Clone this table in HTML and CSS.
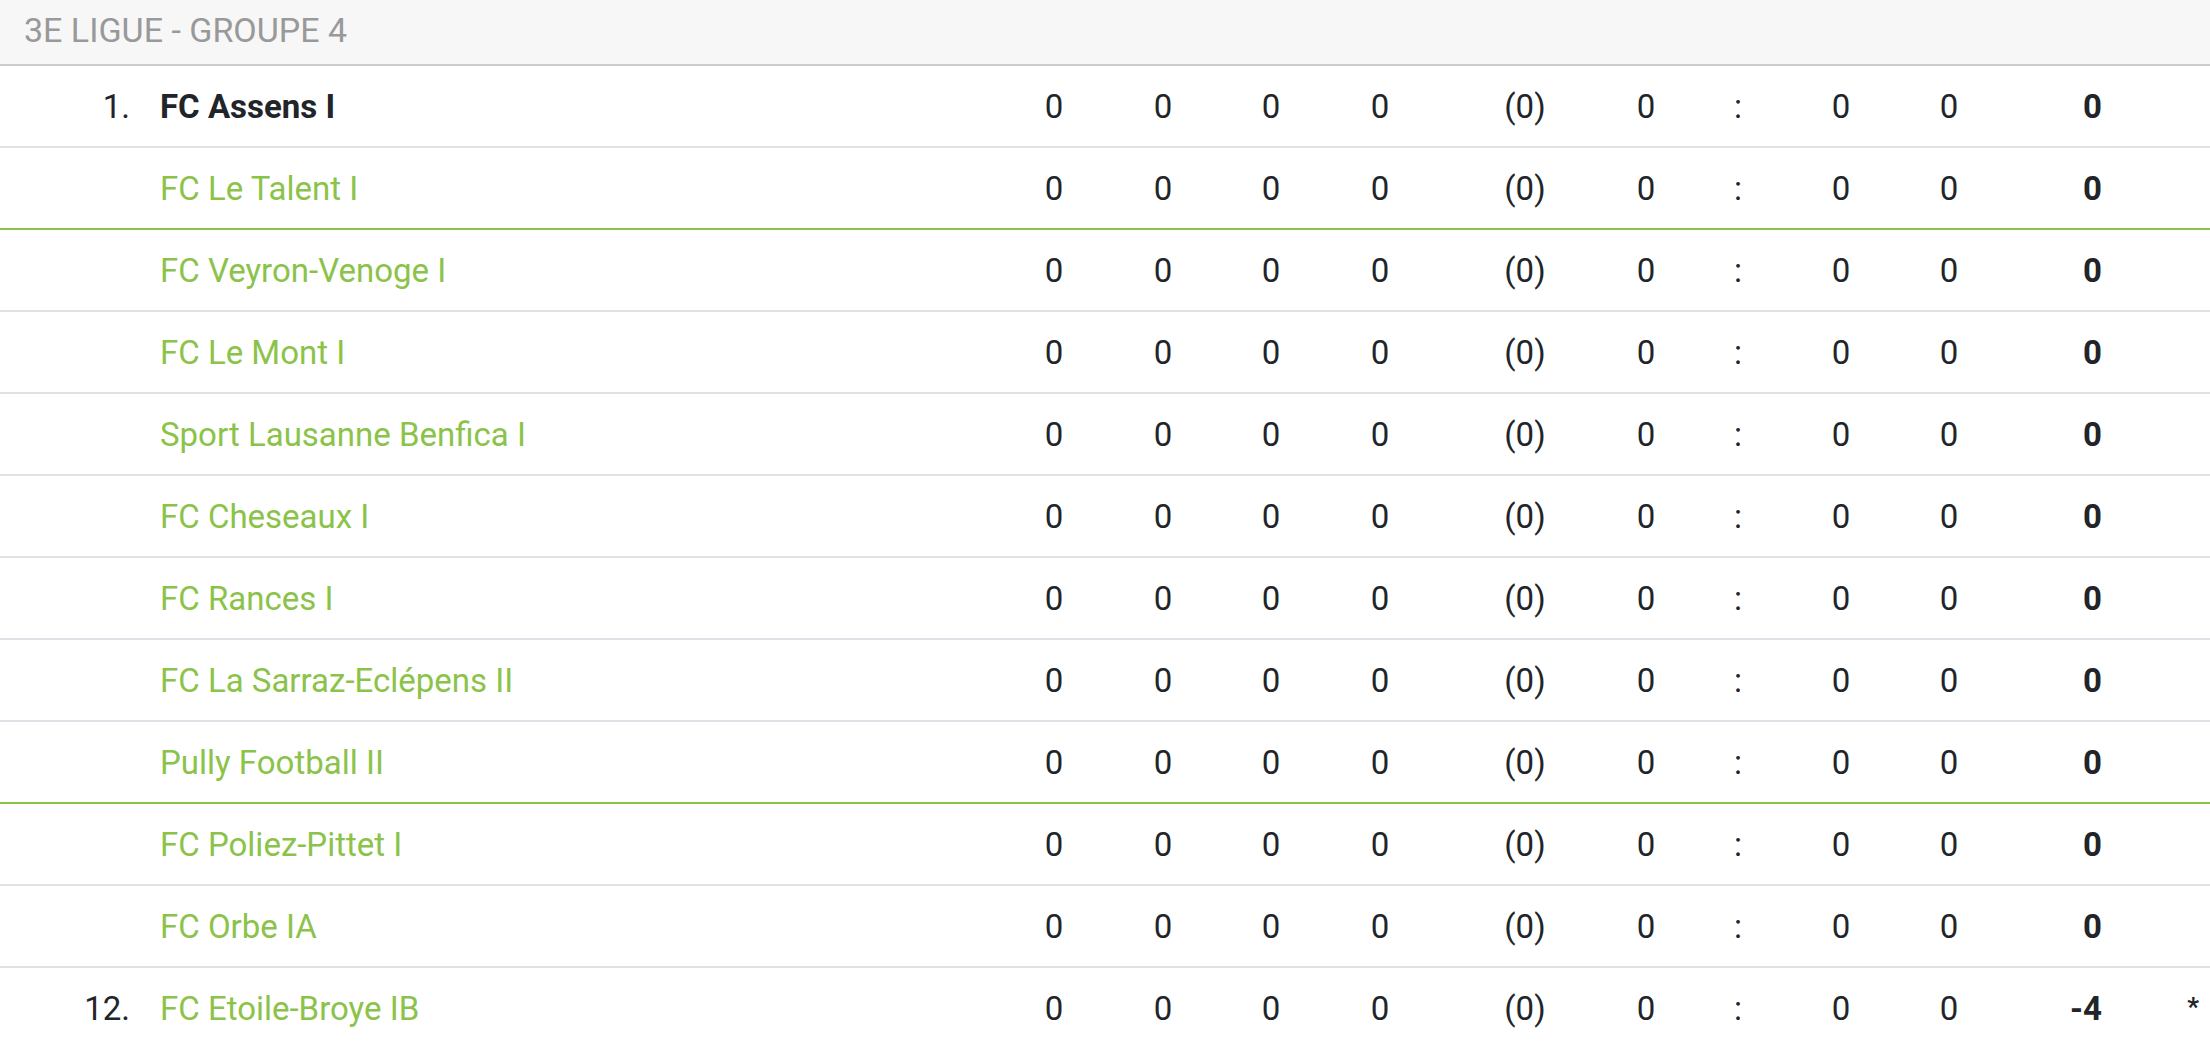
FILE: index.html
```html
<!DOCTYPE html>
<html lang="fr">
<head>
<meta charset="utf-8">
<title>3E LIGUE - GROUPE 4</title>
<link rel="stylesheet" href="styles.css">
</head>
<body>
<div class="standings">
  <div class="group-title">3E LIGUE - GROUPE 4</div>

  <div class="row">
    <div class="rank">1.</div><div class="team team-own">FC Assens I</div>
    <div class="n">0</div><div class="n">0</div><div class="n">0</div><div class="n">0</div>
    <div class="n">(0)</div><div class="n">0</div><div class="n">:</div><div class="n">0</div><div class="n">0</div>
    <div class="pts">0</div><div class="note"></div>
  </div>
  <div class="row row-promo">
    <div class="rank"></div><div class="team">FC Le Talent I</div>
    <div class="n">0</div><div class="n">0</div><div class="n">0</div><div class="n">0</div>
    <div class="n">(0)</div><div class="n">0</div><div class="n">:</div><div class="n">0</div><div class="n">0</div>
    <div class="pts">0</div><div class="note"></div>
  </div>
  <div class="row">
    <div class="rank"></div><div class="team">FC Veyron-Venoge I</div>
    <div class="n">0</div><div class="n">0</div><div class="n">0</div><div class="n">0</div>
    <div class="n">(0)</div><div class="n">0</div><div class="n">:</div><div class="n">0</div><div class="n">0</div>
    <div class="pts">0</div><div class="note"></div>
  </div>
  <div class="row">
    <div class="rank"></div><div class="team">FC Le Mont I</div>
    <div class="n">0</div><div class="n">0</div><div class="n">0</div><div class="n">0</div>
    <div class="n">(0)</div><div class="n">0</div><div class="n">:</div><div class="n">0</div><div class="n">0</div>
    <div class="pts">0</div><div class="note"></div>
  </div>
  <div class="row">
    <div class="rank"></div><div class="team">Sport Lausanne Benfica I</div>
    <div class="n">0</div><div class="n">0</div><div class="n">0</div><div class="n">0</div>
    <div class="n">(0)</div><div class="n">0</div><div class="n">:</div><div class="n">0</div><div class="n">0</div>
    <div class="pts">0</div><div class="note"></div>
  </div>
  <div class="row">
    <div class="rank"></div><div class="team">FC Cheseaux I</div>
    <div class="n">0</div><div class="n">0</div><div class="n">0</div><div class="n">0</div>
    <div class="n">(0)</div><div class="n">0</div><div class="n">:</div><div class="n">0</div><div class="n">0</div>
    <div class="pts">0</div><div class="note"></div>
  </div>
  <div class="row">
    <div class="rank"></div><div class="team">FC Rances I</div>
    <div class="n">0</div><div class="n">0</div><div class="n">0</div><div class="n">0</div>
    <div class="n">(0)</div><div class="n">0</div><div class="n">:</div><div class="n">0</div><div class="n">0</div>
    <div class="pts">0</div><div class="note"></div>
  </div>
  <div class="row">
    <div class="rank"></div><div class="team">FC La Sarraz-Eclépens II</div>
    <div class="n">0</div><div class="n">0</div><div class="n">0</div><div class="n">0</div>
    <div class="n">(0)</div><div class="n">0</div><div class="n">:</div><div class="n">0</div><div class="n">0</div>
    <div class="pts">0</div><div class="note"></div>
  </div>
  <div class="row row-releg">
    <div class="rank"></div><div class="team">Pully Football II</div>
    <div class="n">0</div><div class="n">0</div><div class="n">0</div><div class="n">0</div>
    <div class="n">(0)</div><div class="n">0</div><div class="n">:</div><div class="n">0</div><div class="n">0</div>
    <div class="pts">0</div><div class="note"></div>
  </div>
  <div class="row">
    <div class="rank"></div><div class="team">FC Poliez-Pittet I</div>
    <div class="n">0</div><div class="n">0</div><div class="n">0</div><div class="n">0</div>
    <div class="n">(0)</div><div class="n">0</div><div class="n">:</div><div class="n">0</div><div class="n">0</div>
    <div class="pts">0</div><div class="note"></div>
  </div>
  <div class="row">
    <div class="rank"></div><div class="team">FC Orbe IA</div>
    <div class="n">0</div><div class="n">0</div><div class="n">0</div><div class="n">0</div>
    <div class="n">(0)</div><div class="n">0</div><div class="n">:</div><div class="n">0</div><div class="n">0</div>
    <div class="pts">0</div><div class="note"></div>
  </div>
  <div class="row">
    <div class="rank">12.</div><div class="team">FC Etoile-Broye IB</div>
    <div class="n">0</div><div class="n">0</div><div class="n">0</div><div class="n">0</div>
    <div class="n">(0)</div><div class="n">0</div><div class="n">:</div><div class="n">0</div><div class="n">0</div>
    <div class="pts">-4</div><div class="note">*</div>
  </div>
</div>
</body>
</html>
```

FILE: styles.css
```css
html, body {
  margin: 0;
  padding: 0;
  background: #ffffff;
}

body {
  font-family: Roboto, "Liberation Sans", Arial, sans-serif;
  color: #212529;
  font-size: 33px;
}

.standings {
  width: 2210px;
}

.group-title {
  height: 66px;
  box-sizing: border-box;
  padding: 0 24px 4px;
  display: flex;
  align-items: center;
  background: #f7f7f7;
  border-bottom: 2px solid #cccccc;
  color: #999999;
  font-size: 34px;
}

.row {
  display: grid;
  grid-template-columns: 130px 870px 108px 110px 106px 112px 178px 64px 120px 86px 130px 88px 108px;
  align-items: center;
  height: 82px;
  box-sizing: border-box;
  border-bottom: 2px solid #dee2e6;
}

.row-promo,
.row-releg {
  border-bottom-color: #8bc34a;
}

.rank {
  text-align: right;
}

.team {
  padding-left: 30px;
  color: #8bc34a;
  white-space: nowrap;
}

.team-own {
  color: #212529;
  font-weight: 700;
}

.n {
  text-align: center;
}

.pts {
  text-align: right;
  font-weight: 700;
}

.note {
  text-align: right;
  padding-right: 11px;
  font-size: 26px;
  font-weight: 700;
  align-self: start;
  padding-top: 24px;
}
```
